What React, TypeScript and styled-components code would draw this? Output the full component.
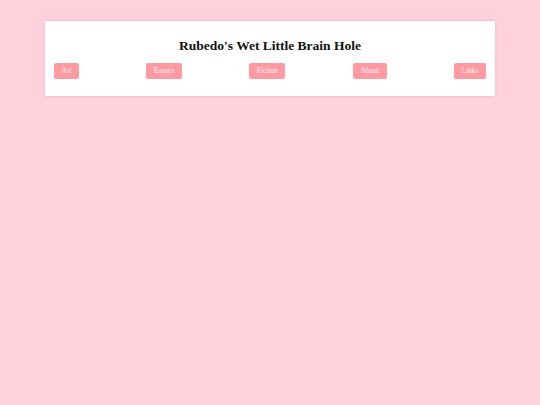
import styled, { createGlobalStyle } from "styled-components";

const GlobalStyle = createGlobalStyle`
  html, body {
    margin: 0;
    padding: 0;
    background-color: #ffd1dc;
    font-family: "Liberation Serif", "Times New Roman", serif;
  }
`;

const links = ["Art", "Essays", "Fiction", "About", "Links"];

const App = () => {
  return (
    <>
      <GlobalStyle />
      <Page>
        <Card>
          <Title>Rubedo's Wet Little Brain Hole</Title>
          <Nav>
            {links.map((l) => (
              <NavButton key={l}>{l}</NavButton>
            ))}
          </Nav>
        </Card>
      </Page>
    </>
  );
};

export default App;

const Page = styled.div`
  min-height: 405px;
  padding-top: 21px;
  box-sizing: border-box;
`;

const Card = styled.div`
  width: 450px;
  margin: 0 auto;
  background-color: #fff;
  padding: 17px 9px 17px 9px;
  box-sizing: border-box;
  box-shadow: 0 0 4px rgba(0, 0, 0, 0.12);
`;

const Title = styled.h1`
  margin: 0 0 9px 0;
  text-align: center;
  font-size: 13.5px;
  font-weight: 700;
  line-height: 16px;
  color: #111;
`;

const Nav = styled.div`
  display: flex;
  justify-content: space-between;
  align-items: center;
`;

const NavButton = styled.button`
  height: 16px;
  padding: 0 7.5px;
  border: none;
  border-radius: 2px;
  background-color: #ff9aa2;
  color: #fff2f4;
  font-family: "Liberation Serif", "Times New Roman", serif;
  font-size: 7.5px;
  line-height: 16px;
  cursor: pointer;
`;
